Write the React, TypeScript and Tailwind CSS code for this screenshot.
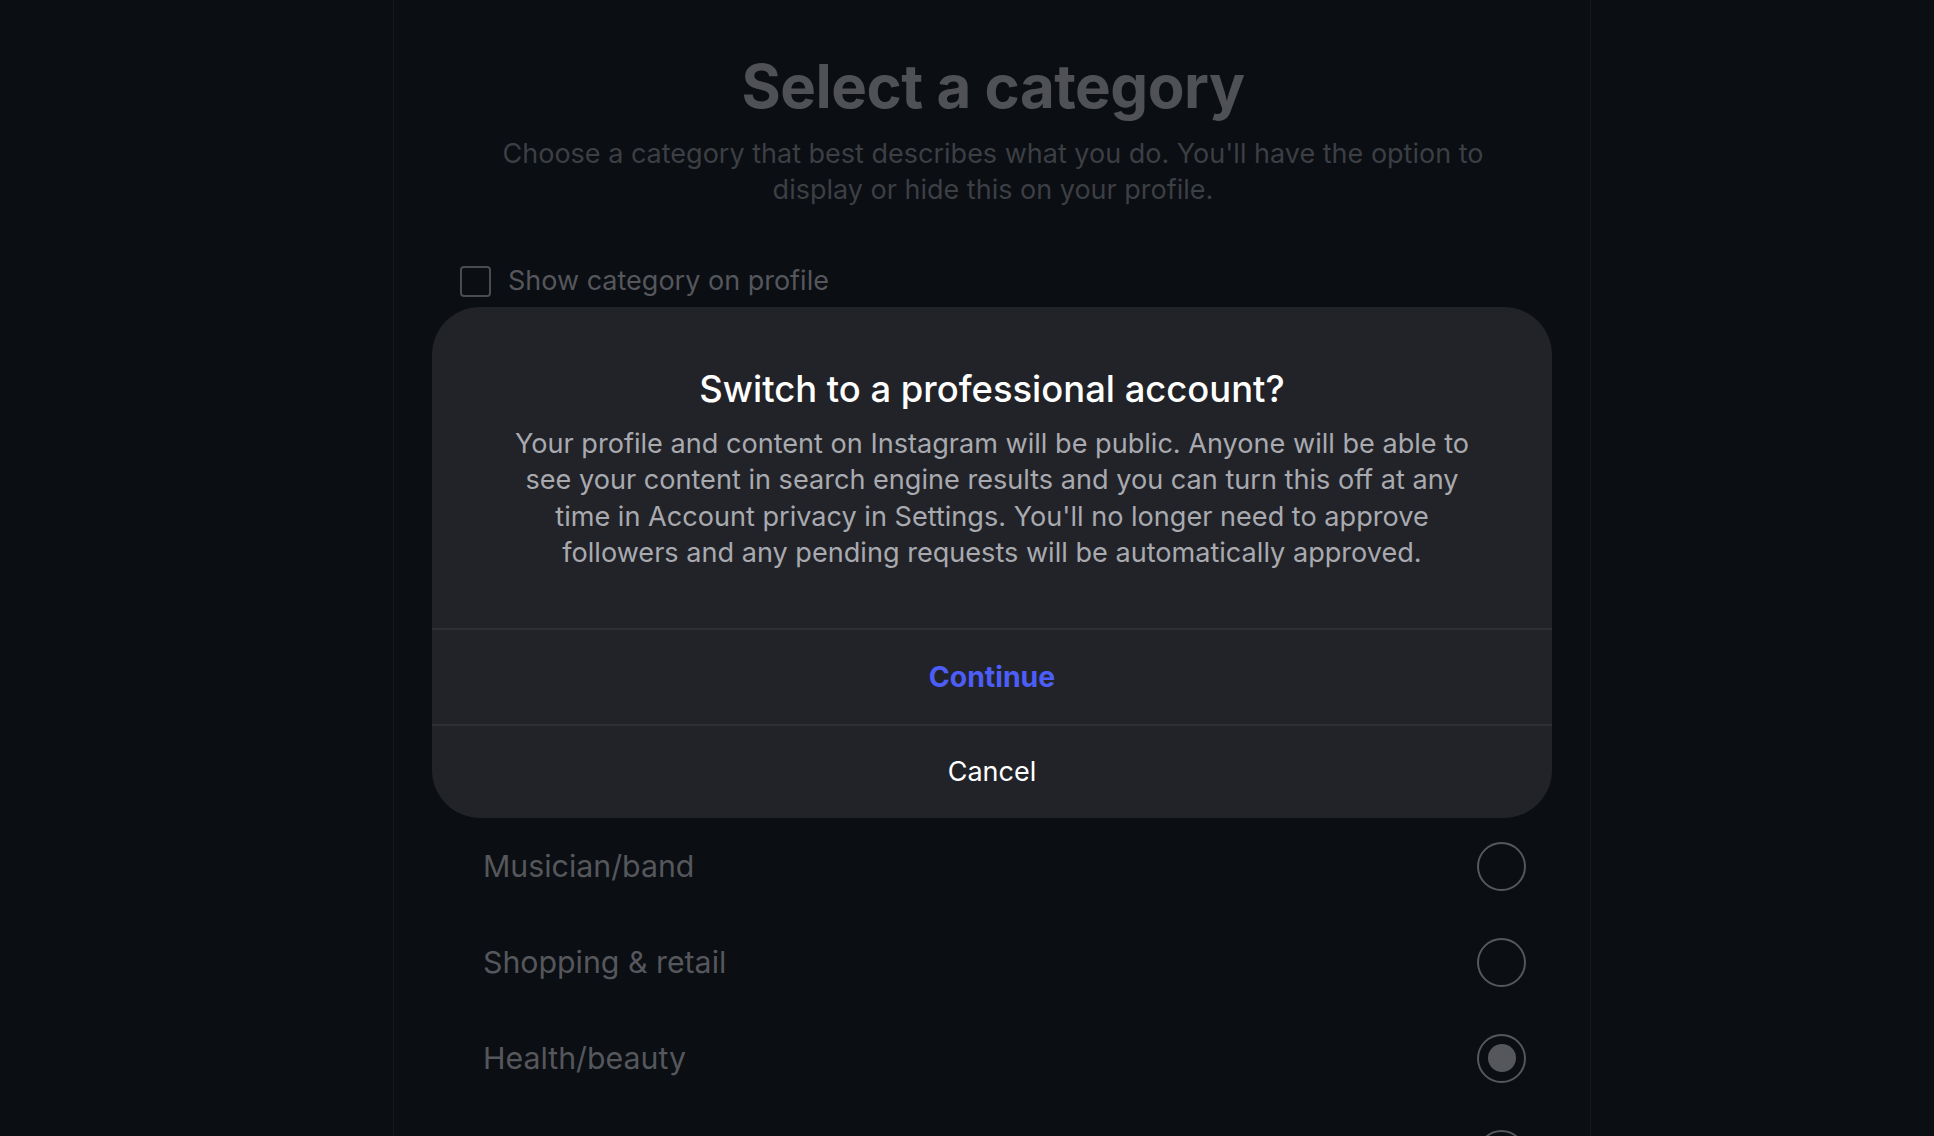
import React from "react";

const rows = [
  { label: "Musician/band", selected: false },
  { label: "Shopping & retail", selected: false },
  { label: "Health/beauty", selected: true },
  { label: "Video creator", selected: false },
];

export default function App() {
  return (
    <div className="relative h-[1136px] w-full overflow-hidden bg-[#0b0e13] font-['Inter',_'Noto_Sans',_sans-serif]">
      <div className="ml-[393px] flex h-full w-[1198px] flex-col border-x border-[#15181d] pl-[66px] pr-[64px]">
        <h1 className="mt-[52px] text-center text-[60px] font-bold leading-[68px] tracking-[-0.5px] text-[#4f5156]">
          Select a category
        </h1>
        <p className="mx-auto mt-[16px] w-[1010px] text-center text-[27px] leading-[36px] text-[#3c3f44]">
          Choose a category that best describes what you do. You'll have the option to display or hide this on your profile.
        </p>
        <label className="mt-[56px] flex items-center gap-[17px]">
          <span className="h-[31px] w-[31px] rounded-[4px] border-2 border-[#4a4c51]" />
          <span className="text-[27px] leading-[34px] text-[#55575c]">Show category on profile</span>
        </label>
        <div className="mt-[40px] flex flex-col">
          <div className="h-[480px]" />
          {rows.map((r) => (
            <div key={r.label} className="flex h-[96px] items-center justify-between pl-[23px]">
              <span className="text-[30.3px] leading-[40px] text-[#55575c]">{r.label}</span>
              <span className="flex h-[49px] w-[49px] items-center justify-center rounded-full border-[2.5px] border-[#55575c]">
                {r.selected && <span className="h-[28px] w-[28px] rounded-full bg-[#55575c]" />}
              </span>
            </div>
          ))}
        </div>
      </div>

      <div className="absolute left-[432px] top-[307px] flex w-[1120px] flex-col overflow-hidden rounded-[48px] bg-[#222328]">
        <div className="flex flex-col items-center px-[72px] pb-[57px] pt-[58px]">
          <h2 className="text-center text-[36.4px] font-medium leading-[48px] text-white">
            Switch to a professional account?
          </h2>
          <p className="mt-[13px] text-center text-[27.1px] leading-[36.3px] text-[#a8aab0]">
            Your profile and content on Instagram will be public. Anyone will be able to see your content in search engine results and you can turn this off at any time in Account privacy in Settings. You'll no longer need to approve followers and any pending requests will be automatically approved.
          </p>
        </div>
        <button className="h-[96px] border-t-2 border-[#2c2f33] text-[28.4px] font-bold text-[#4c5ef7]">
          Continue
        </button>
        <button className="h-[94px] border-t-2 border-[#2c2f33] text-[27px] text-white">
          Cancel
        </button>
      </div>
    </div>
  );
}
